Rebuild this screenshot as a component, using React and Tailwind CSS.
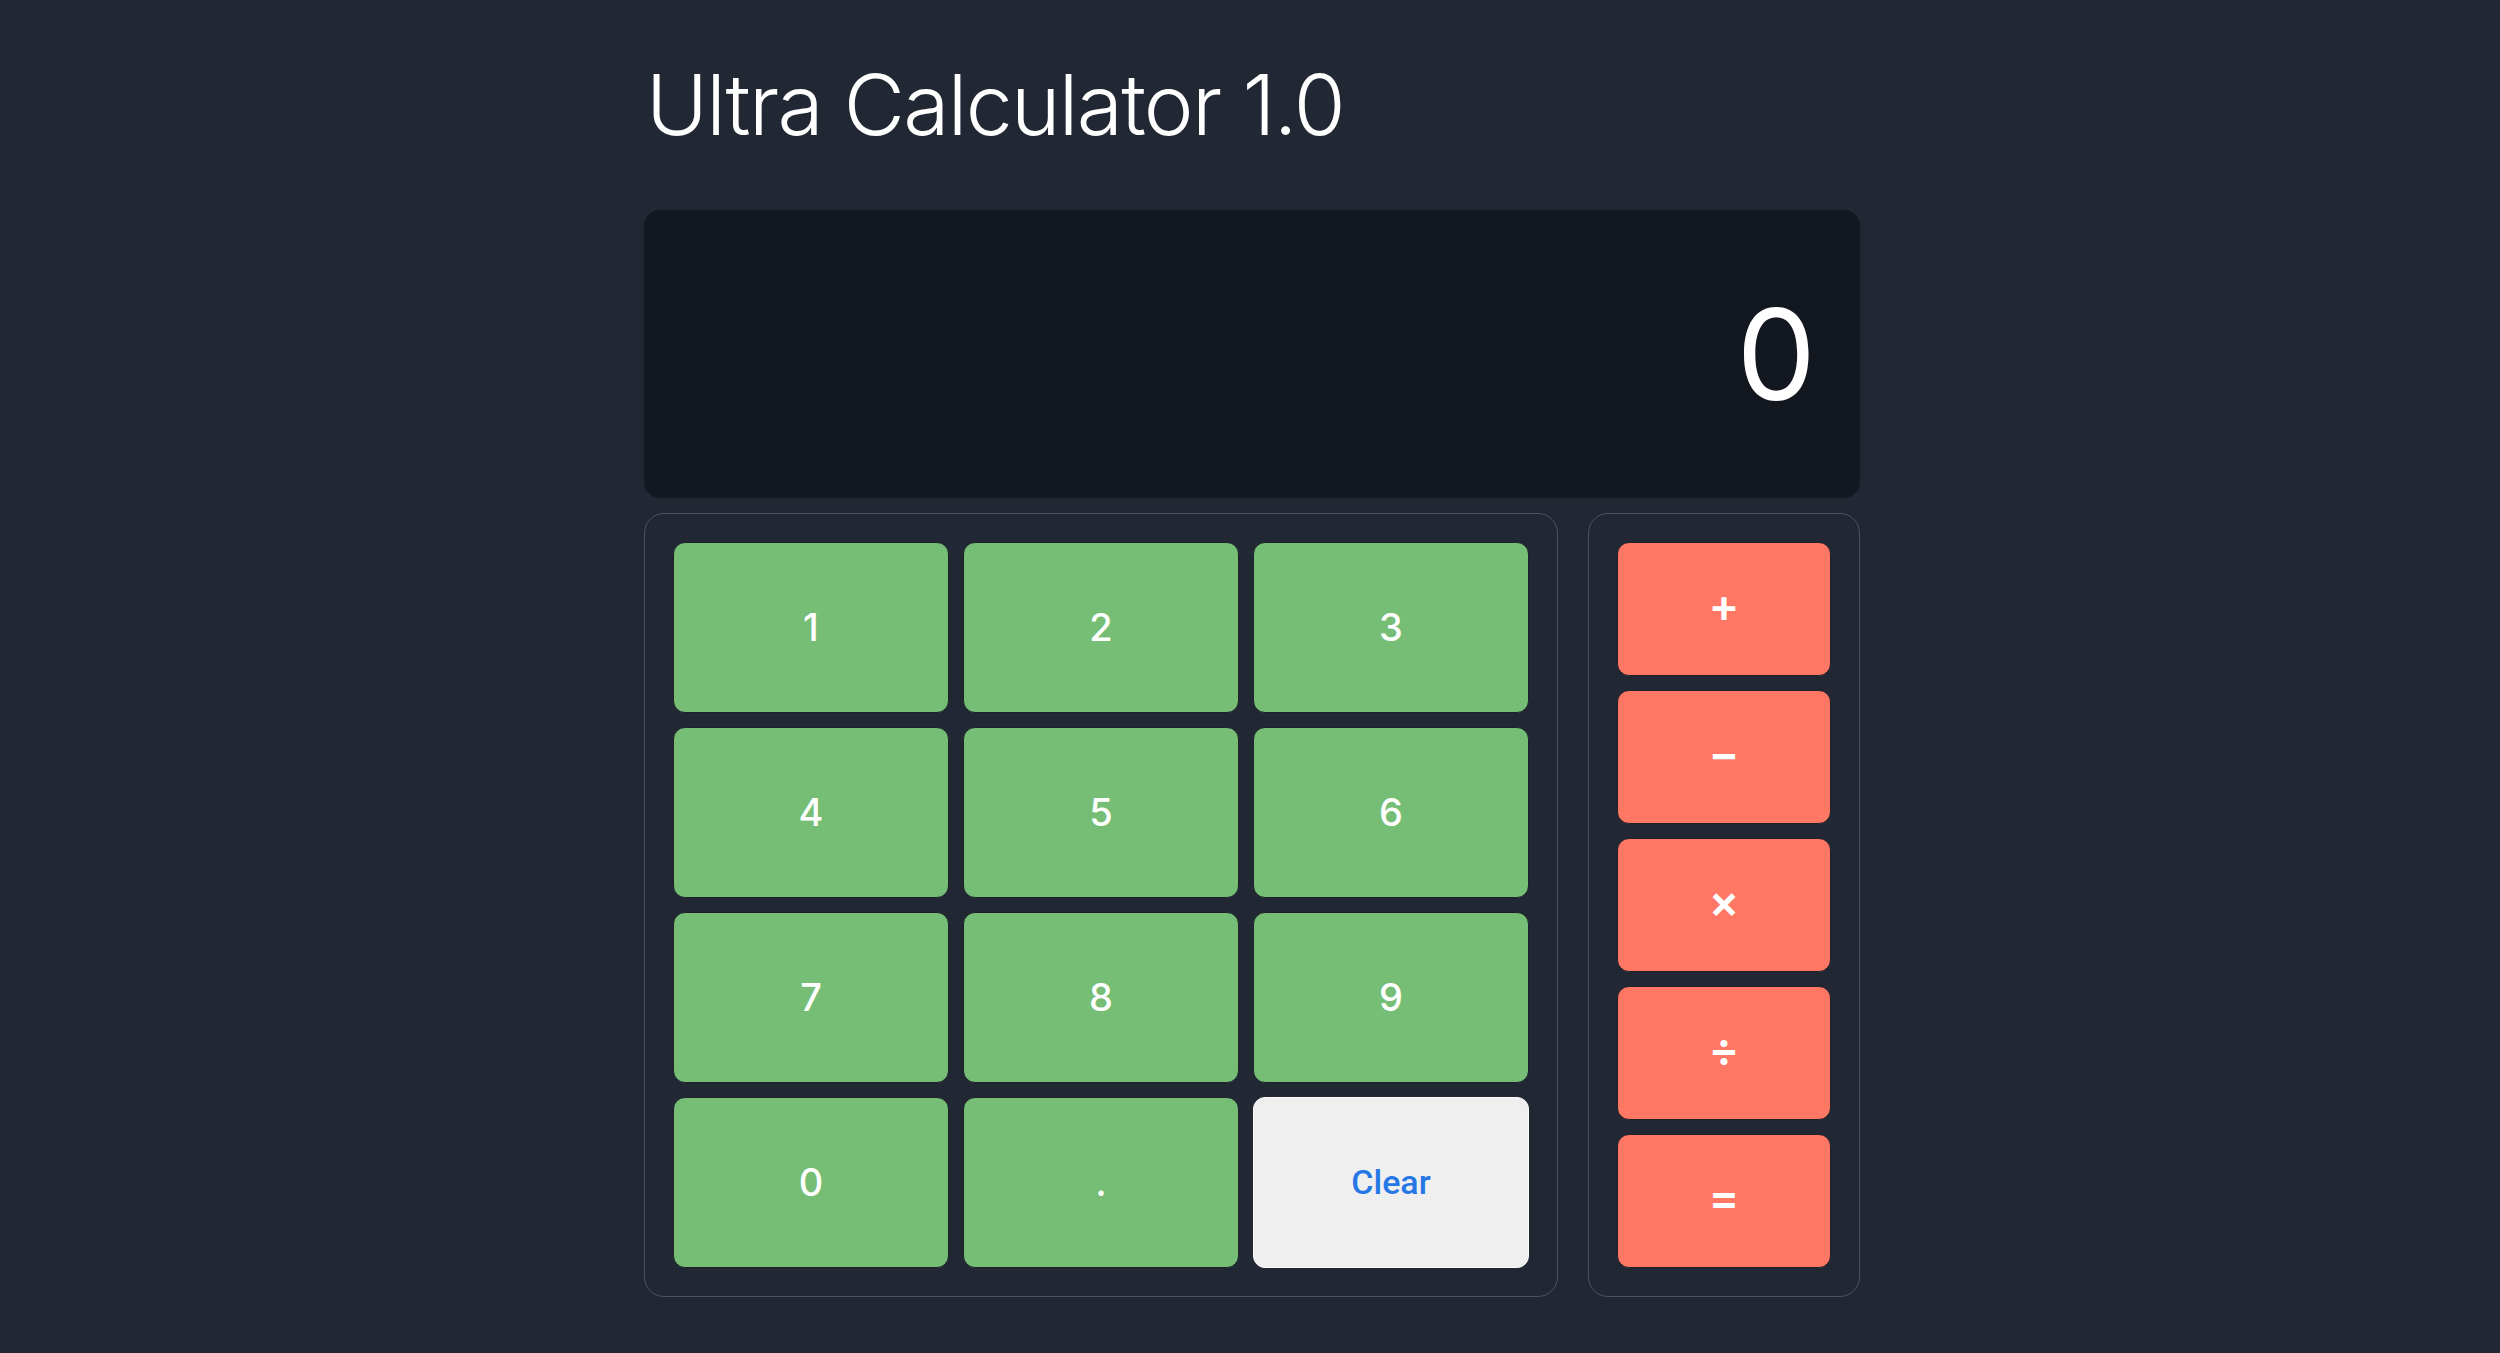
const digits = ["1", "2", "3", "4", "5", "6", "7", "8", "9", "0", "."];
const ops = ["+", "−", "×", "÷", "="];

const App = () => {
  return (
    <div className="min-h-screen w-full bg-[#212733] pt-[50px] font-['Inter',sans-serif] text-white">
      <div className="ml-[644px] w-[1216px]">
        {/* Title */}
        <h1 className="pl-[2px] text-[84px] font-light leading-[110px] tracking-[-0.02em]">
          Ultra Calculator 1.0
        </h1>

        {/* Display */}
        <div className="mt-[50px] flex h-[288px] items-center justify-end rounded-2xl bg-[#13171f] pr-[44px]">
          <span className="text-[126px] font-normal leading-none">0</span>
        </div>

        {/* Keys */}
        <div className="mt-[15px] flex gap-[30px]">
          <div className="flex-1 rounded-[20px] border border-[#4b5260] p-[28px]">
            <div className="grid grid-cols-3 gap-[14px]">
              {digits.map((d) => (
                <button
                  key={d}
                  className="flex h-[171px] items-center justify-center rounded-xl border border-[#1b2029] bg-[#76be75] text-[38px] font-medium text-white"
                >
                  {d}
                </button>
              ))}
              <button className="flex h-[171px] items-center justify-center rounded-xl border border-[#fafafa] bg-[#efefef] font-['Roboto',sans-serif] text-[34px] font-medium text-[#2677e6]">
                Clear
              </button>
            </div>
          </div>

          <div className="w-[272px] rounded-[20px] border border-[#4b5260] p-[28px]">
            <div className="flex flex-col gap-[14px]">
              {ops.map((o) => (
                <button
                  key={o}
                  className="flex h-[134px] items-center justify-center rounded-xl border border-[#1b2029] bg-[#fe7664] pb-[8px] text-[46px] font-semibold text-white"
                >
                  {o}
                </button>
              ))}
            </div>
          </div>
        </div>
      </div>
    </div>
  );
};

export default App;
